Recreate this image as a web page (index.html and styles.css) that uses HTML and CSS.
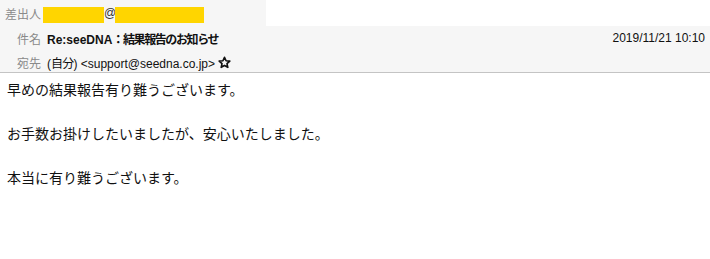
FILE: index.html
```html
<!DOCTYPE html>
<html>
<head>
    <meta charset="UTF-8">
    <title>Re:seeDNA：結果報告のお知らせ</title>
    <link rel="stylesheet" href="styles.css">
</head>
<body>
    <div class="header">
        <div class="row row-from">
            <span class="label">差出人</span>
            <span class="redact redact-name"></span>
            <span class="at">@</span>
            <span class="redact redact-domain"></span>
            <div class="toolbar"></div>
        </div>
        <div class="row">
            <span class="label">件名</span>
            <span class="subject">Re:seeDNA<span class="ja">：結果報告のお知らせ</span></span>
            <span class="date">2019/11/21 10:10</span>
        </div>
        <div class="row">
            <span class="label">宛先</span>
            <span class="value">(<span class="ja">自分</span>) &lt;support@seedna.co.jp&gt;</span>
            <svg class="star" width="13" height="13" viewBox="0 0 24 24">
                <path d="M12 2.5l2.9 6.3 6.9.7-5.2 4.6 1.5 6.8L12 17.4l-6.1 3.5 1.5-6.8-5.2-4.6 6.9-.7z" fill="none" stroke="#111" stroke-width="3" stroke-linejoin="round"/>
            </svg>
        </div>
    </div>
    <div class="message">
        <p>早めの結果報告有り難うございます。</p>
        <p>&nbsp;</p>
        <p>お手数お掛けしたいましたが、安心いたしました。</p>
        <p>&nbsp;</p>
        <p>本当に有り難うございます。</p>
    </div>
</body>
</html>
```

FILE: styles.css
```css
body {
    margin: 0;
    background: #ffffff;
    font-family: "Liberation Sans", "Noto Sans CJK JP", sans-serif;
    color: #111;
}
.header {
    background: #f6f6f6;
    border-bottom: 1px solid #c4c4c4;
    height: 72px;
}
.row {
    display: flex;
    align-items: center;
    height: 24px;
    font-size: 12px;
    padding-right: 5px;
}
.row-from {
    height: 26px;
    padding-right: 0;
    align-items: stretch;
}
.row-from .label,
.row-from .at {
    align-self: center;
}
.label {
    width: 41px;
    text-align: right;
    color: #8a8a8a;
    margin-right: 6px;
    flex-shrink: 0;
}
.row-from .label {
    margin-right: 2px;
}
.redact {
    background: #ffd500;
    margin: 7px 0 3px;
}
.redact-name {
    width: 61px;
}
.redact-domain {
    width: 89px;
}
.at {
    width: 11px;
    text-align: center;
    color: #333;
}
.toolbar {
    background: #ffffff;
    margin-left: 62px;
    flex: 1;
}
.subject {
    font-weight: bold;
}
.subject .ja {
    letter-spacing: -1.4px;
}
.value .ja {
    letter-spacing: -0.8px;
}
.date {
    margin-left: auto;
}
.star {
    margin-left: 3px;
}
.message {
    padding: 5px 7px;
    font-family: "Noto Sans CJK JP", sans-serif;
    font-size: 14px;
    line-height: 22px;
}
.message p {
    margin: 0;
}
```
